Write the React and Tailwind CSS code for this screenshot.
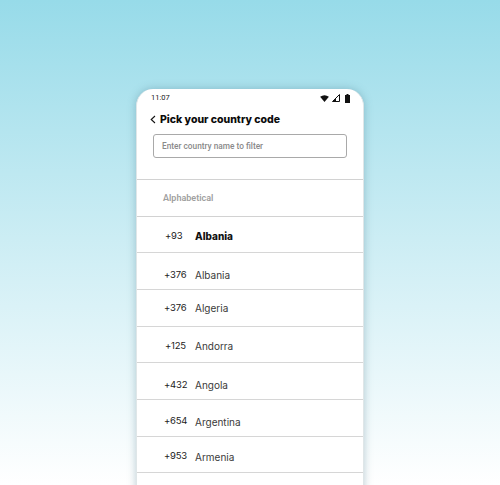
const rows = [
  { code: '+93', name: 'Albania', bold: true, cls: 'h-[36px] pt-[13px]', codeCls: 'pl-[28px]' },
  { code: '+376', name: 'Albania', cls: 'h-[37px] pt-[16px]', codeCls: 'pl-[27px]' },
  { code: '+376', name: 'Algeria', cls: 'h-[37px] pt-[12px]', codeCls: 'pl-[27px]' },
  { code: '+125', name: 'Andorra', cls: 'h-[36px] pt-[13px]', codeCls: 'pl-[28px]' },
  { code: '+432', name: 'Angola', cls: 'h-[37px] pt-[16px]', codeCls: 'pl-[27px]' },
  { code: '+654', name: 'Argentina', cls: 'h-[37px] pt-[16px]', codeCls: 'pl-[27px] -mt-[1px]' },
  { code: '+953', name: 'Armenia', cls: 'h-[36px] pt-[14px]', codeCls: 'pl-[27px] -mt-[1px]' },
];

function StatusIcons() {
  return (
    <div className="flex items-center">
      <svg width="9" height="7" viewBox="0 0 10 8"><path d="M0 2 Q5 -1.5 10 2 L5 8 Z" fill="#111" /></svg>
      <svg width="8" height="8" viewBox="0 0 8 8" className="ml-[3px]"><path d="M7.5 0.5 V7.5 H0.5 Z" fill="none" stroke="#111" strokeWidth="1" /><path d="M4 4 V7.5 H0.5 Z" fill="#111" /></svg>
      <svg width="5" height="9" viewBox="0 0 5 9" className="ml-[5px]"><path d="M1.5 0 H3.5 V1 H5 V9 H0 V1 H1.5 Z" fill="#111" /></svg>
    </div>
  );
}

export default function App() {
  return (
    <div className="w-[500px] h-[485px] overflow-hidden bg-gradient-to-b from-[#97dbe9] to-[#ffffff] flex justify-center pt-[89px] font-['Inter',sans-serif]">
      <div className="w-[228px] h-[420px] bg-white rounded-t-[17px] shadow-[0_0_8px_rgba(60,110,130,0.35)] border-x border-[#dfe6e8] shrink-0">
        <div className="h-[18px] flex items-center justify-between pl-[14px] pr-[13px]">
          <span className="text-[7.5px] text-[#222] font-['Roboto',sans-serif] leading-none">11:07</span>
          <StatusIcons />
        </div>
        <div className="flex items-center pl-[13px] h-[16px] mt-[5px] gap-[4px]">
          <svg width="6" height="9" viewBox="0 0 6 9" className="-mt-[1px]"><path d="M5 1 L1.2 4.5 L5 8" fill="none" stroke="#111" strokeWidth="1.1" /></svg>
          <h1 className="text-[10.5px] font-extrabold text-[#0b0b0b] leading-none whitespace-nowrap mt-[1px]">Pick your country code</h1>
        </div>
        <div className="ml-[16px] mt-[6px] w-[194px] h-[24px] border border-[#a9a9a9] rounded-[3px] flex items-center pl-[8px]">
          <span className="text-[8.3px] font-medium text-[#8a8a8a] font-['Roboto',sans-serif] leading-none">Enter country name to filter</span>
        </div>
        <div className="mt-[21px] h-[38px] border-y border-[#d2d2d2] pl-[26px] flex items-center">
          <span className="text-[9px] font-semibold text-[#a0a0a0] font-['Roboto',sans-serif] leading-none">Alphabetical</span>
        </div>
        {rows.map((row, i) => (
          <div key={i} className={`flex items-start border-b border-[#d6d6d6] box-border ${row.cls}`}>
            <span className={`w-[58px] text-[9.5px] tracking-[-0.2px] text-[#222] leading-[12px] ${row.codeCls}`}>{row.code}</span>
            <span className={`text-[10px] leading-[12px] ${row.bold ? 'font-extrabold text-[#111]' : 'text-[#3a3a3a]'}`}>{row.name}</span>
          </div>
        ))}
      </div>
    </div>
  );
}
